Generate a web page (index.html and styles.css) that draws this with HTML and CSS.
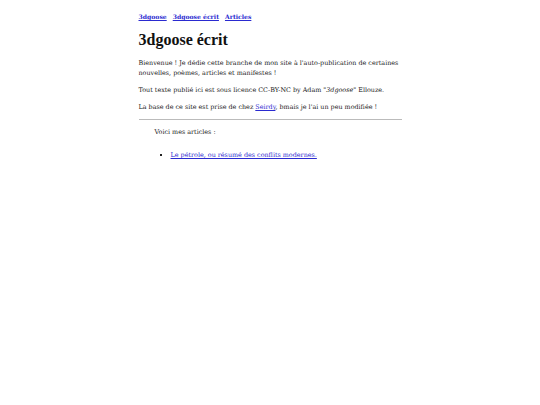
FILE: index.html
```html
<!DOCTYPE html>
<html lang="fr">
<head>
<meta charset="utf-8">
<title>3dgoose écrit</title>
<link rel="stylesheet" href="styles.css">
</head>
<body>
<div class="page">
  <nav class="nav">
    <a href="#">3dgoose</a>
    <a href="#">3dgoose écrit</a>
    <a href="#">Articles</a>
  </nav>
  <h1 class="title">3dgoose écrit</h1>
  <p class="text">Bienvenue ! Je dédie cette branche de mon site à l'auto-publication de certaines nouvelles, poèmes, articles et manifestes !</p>
  <p class="text">Tout texte publié ici est sous licence CC-BY-NC by Adam <em>"3dgoose"</em> Ellouze.</p>
  <p class="text">La base de ce site est prise de chez <a class="link" href="#">Seirdy</a>, bmais je l'ai un peu modifiée !</p>
  <hr class="rule">
  <section class="articles">
    <p class="text">Voici mes articles :</p>
    <ul class="list">
      <li><a class="link" href="#">Le pétrole, ou résumé des conflits modernes.</a></li>
    </ul>
  </section>
</div>
</body>
</html>
```
FILE: styles.css
```css
html, body {
  margin: 0;
  padding: 0;
  background: #fff;
}
body {
  font-family: "DejaVu Serif", serif;
  font-size: 6.4px;
  line-height: 10px;
  color: #222;
}
.page {
  width: 263px;
  margin: 0 auto;
  padding-top: 12px;
}
.nav {
  display: flex;
  gap: 6px;
  font-weight: bold;
  font-size: 6.1px;
}
.nav a, .link {
  color: #2a2ad0;
}
.title {
  font-family: "Liberation Serif", serif;
  font-size: 16px;
  line-height: 20px;
  font-weight: bold;
  margin: 8px 0 8px;
  color: #111;
}
.text {
  margin: 0 0 7px;
}
.rule {
  border: 0;
  border-top: 1px solid #bbb;
  margin: 4px 0 0;
}
.articles {
  padding: 7px 16px;
}
.list {
  margin: 13px 0 0;
  padding-left: 16px;
  list-style: square;
}
```
